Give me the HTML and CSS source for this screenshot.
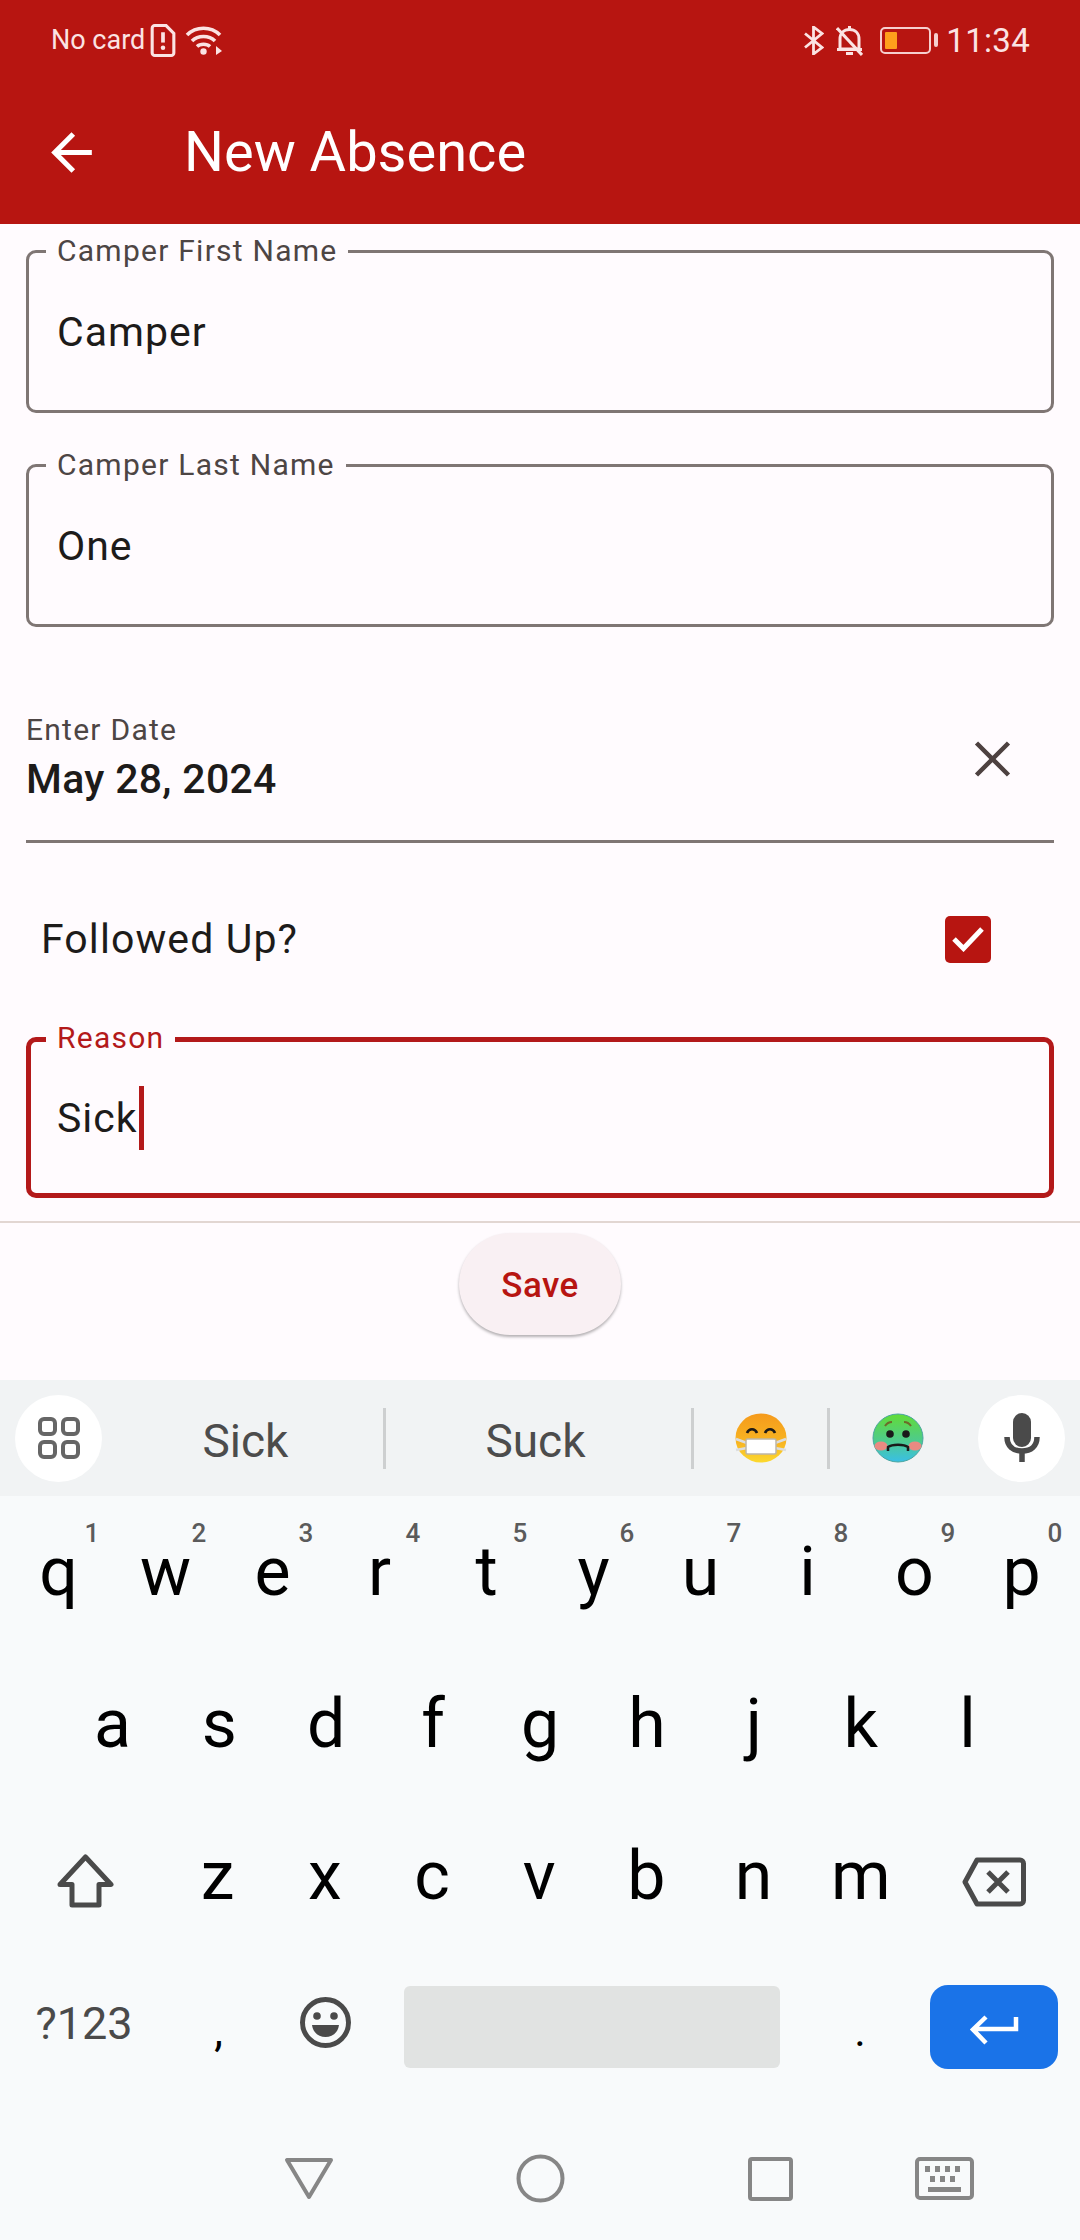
FILE: index.html
```html
<!DOCTYPE html>
<html lang="en">
<head>
<meta charset="utf-8">
<title>New Absence</title>
<link rel="stylesheet" href="styles.css">
</head>
<body>
<div class="phone">
  <header class="header">
    <div class="status">
      <span class="carrier">No card</span>
      <svg class="i-sim" viewBox="0 0 24 32"><path d="M4 1.500H15L22.500 9V28a2.500 2.500 0 0 1-2.500 2.500H4A2.500 2.500 0 0 1 1.500 28V4A2.500 2.500 0 0 1 4 1.500Z" fill="none" stroke="currentColor" stroke-width="3"/><path d="M12 8V18" stroke="currentColor" stroke-width="3.600"/><circle cx="12" cy="23" r="2.200" fill="currentColor"/></svg>
      <svg class="i-wifi" viewBox="0 0 37 29"><path d="M2 9C11 0 26 0 35 9" fill="none" stroke="currentColor" stroke-width="3.600"/><path d="M7 15C13 9 24 9 30 15" fill="none" stroke="currentColor" stroke-width="3.600"/><path d="M12 20.500C15 17.500 22 17.500 25 20.500" fill="none" stroke="currentColor" stroke-width="3.400"/><circle cx="18.500" cy="25.500" r="3.200" fill="currentColor"/><path d="M31 20V29L37 25Z" fill="currentColor"/></svg>
      <span class="status-gap"></span>
      <svg class="i-bt" viewBox="0 0 20 29"><path d="M1 7.500L18 21.500L9.500 28V1L18 7.500L1 21.500" fill="none" stroke="currentColor" stroke-width="2.800"/></svg>
      <svg class="i-bell" viewBox="0 0 27 31"><path d="M4 24V14C4 8 8 4.500 13.500 4.500S23 8 23 14V24Z" fill="none" stroke="currentColor" stroke-width="3"/><path d="M1 24.500H26M10 28.500H17M13.500 1V4" fill="none" stroke="currentColor" stroke-width="3"/><path d="M1 3L26 30" stroke="currentColor" stroke-width="3"/></svg>
      <div class="battery"><span class="battery-level"></span></div>
      <span class="battery-nub"></span>
      <span class="clock">11:34</span>
    </div>
    <div class="appbar">
      <svg class="i-back" viewBox="0 0 24 24"><path d="M20 11H7.830l5.590-5.590L12 4l-8 8 8 8 1.410-1.410L7.830 13H20v-2z" fill="currentColor"/></svg>
      <h1 class="title">New Absence</h1>
    </div>
  </header>

  <main class="form">
    <div class="field">
      <span class="field-label">Camper First Name</span>
      <span class="field-value">Camper</span>
    </div>
    <div class="field field-next">
      <span class="field-label">Camper Last Name</span>
      <span class="field-value">One</span>
    </div>
    <div class="date-row">
      <div class="date-text">
        <div class="date-label">Enter Date</div>
        <div class="date-value">May 28, 2024</div>
      </div>
      <svg class="i-clear" viewBox="0 0 36 36"><path d="M2 2L34 34M34 2L2 34" fill="none" stroke="currentColor" stroke-width="4.500"/></svg>
    </div>
    <div class="check-row">
      <span class="check-label">Followed Up?</span>
      <span class="checkbox"><svg class="i-check" viewBox="0 0 34 26"><path d="M3 13L12.500 22.500L31 3" fill="none" stroke="currentColor" stroke-width="5"/></svg></span>
    </div>
    <div class="field field-focus">
      <span class="field-label">Reason</span>
      <span class="field-value">Sick<span class="caret"></span></span>
    </div>
  </main>

  <div class="actions">
    <button class="save" type="button">Save</button>
  </div>

  <section class="keyboard">
    <div class="strip">
      <span class="round-btn">
        <svg class="i-apps" viewBox="0 0 42 42"><g fill="none" stroke="currentColor" stroke-width="4"><rect x="2" y="2" width="15" height="15" rx="4"/><rect x="25" y="2" width="15" height="15" rx="4"/><rect x="2" y="25" width="15" height="15" rx="4"/><rect x="25" y="25" width="15" height="15" rx="4"/></g></svg>
      </span>
      <span class="sug sug-a">Sick</span>
      <span class="sep"></span>
      <span class="sug sug-b">Suck</span>
      <span class="sep"></span>
      <span class="sug sug-c">
        <svg class="emoji" viewBox="0 0 52 50">
          <defs><linearGradient id="g1" x1="0" y1="0" x2="0" y2="1"><stop offset="0" stop-color="#f59a1c"/><stop offset=".6" stop-color="#f8b522"/><stop offset="1" stop-color="#fcd92f"/></linearGradient></defs>
          <ellipse cx="26" cy="25" rx="25.500" ry="24.500" fill="url(#g1)"/>
          <path d="M1 26L12 30M1 37L12 35M51 26L40 30M51 37L40 35" stroke="#ddd" stroke-width="2.500"/>
          <rect x="11" y="26" width="30" height="15" rx="1.500" fill="#fff" stroke="#bdb6a8" stroke-width="1.500"/>
          <path d="M12 20C14 15 20 15 22 20M30 20C32 15 38 15 40 20" fill="none" stroke="#1e1a16" stroke-width="2.600"/>
        </svg>
      </span>
      <span class="sep"></span>
      <span class="sug sug-d">
        <svg class="emoji" viewBox="0 0 52 50">
          <defs><linearGradient id="g2" x1="0" y1="0" x2="0" y2="1"><stop offset="0" stop-color="#62dc35"/><stop offset=".55" stop-color="#4ecb8c"/><stop offset="1" stop-color="#39bfe6"/></linearGradient></defs>
          <ellipse cx="26" cy="25" rx="25" ry="24" fill="url(#g2)" stroke="#4aa5a0" stroke-width="1"/>
          <ellipse cx="9" cy="33" rx="6.500" ry="4.500" fill="#ea8a82"/>
          <ellipse cx="43" cy="33" rx="6.500" ry="4.500" fill="#ea8a82"/>
          <circle cx="18" cy="21" r="3.800" fill="#1a1a1a"/>
          <circle cx="34" cy="21" r="3.800" fill="#1a1a1a"/>
          <path d="M13 13C15 10 18 9 20 9M39 13C37 10 34 9 32 9" fill="none" stroke="#6d6b2a" stroke-width="2"/>
          <path d="M16 38V34C20 31 32 31 36 34V38" fill="none" stroke="#1a1a1a" stroke-width="2.500"/>
        </svg>
      </span>
      <span class="round-btn round-mic">
        <svg class="i-mic" viewBox="0 0 36 50"><rect x="9" y="0" width="18" height="34" rx="9" fill="currentColor"/><path d="M3 24C3 33 9 38 18 38S33 33 33 24" fill="none" stroke="currentColor" stroke-width="5.500"/><path d="M18 38V49" stroke="currentColor" stroke-width="5.500"/></svg>
      </span>
    </div>

    <div class="keys row-1">
      <span class="key">q<sup class="hint">1</sup></span>
      <span class="key">w<sup class="hint">2</sup></span>
      <span class="key">e<sup class="hint">3</sup></span>
      <span class="key">r<sup class="hint">4</sup></span>
      <span class="key">t<sup class="hint">5</sup></span>
      <span class="key">y<sup class="hint">6</sup></span>
      <span class="key">u<sup class="hint">7</sup></span>
      <span class="key">i<sup class="hint">8</sup></span>
      <span class="key">o<sup class="hint">9</sup></span>
      <span class="key">p<sup class="hint">0</sup></span>
    </div>
    <div class="keys row-2">
      <span class="key">a</span><span class="key">s</span><span class="key">d</span><span class="key">f</span><span class="key">g</span><span class="key">h</span><span class="key">j</span><span class="key">k</span><span class="key">l</span>
    </div>
    <div class="keys row-3">
      <span class="key">
        <svg class="i-shift" viewBox="0 0 57 54"><path d="M28.500 3L54 30.500H42V51H15V30.500H3Z" fill="none" stroke="currentColor" stroke-width="5" stroke-linejoin="round"/></svg>
      </span>
      <span class="key">z</span><span class="key">x</span><span class="key">c</span><span class="key">v</span><span class="key">b</span><span class="key">n</span><span class="key">m</span>
      <span class="key">
        <svg class="i-bksp" viewBox="0 0 64 50"><path d="M15 3H58A3.500 3.500 0 0 1 61.500 6.500V43.500A3.500 3.500 0 0 1 58 47H15L3 25Z" fill="none" stroke="currentColor" stroke-width="5" stroke-linejoin="round"/><path d="M26 15L46 35M46 15L26 35" stroke="currentColor" stroke-width="5"/></svg>
      </span>
    </div>
    <div class="row-4">
      <span class="sym">?123</span>
      <span class="punct">,</span>
      <span class="smile-key">
        <svg class="i-smile" viewBox="0 0 51 51"><circle cx="25.500" cy="25.500" r="23" fill="none" stroke="currentColor" stroke-width="5"/><circle cx="17" cy="19" r="3.800" fill="currentColor"/><circle cx="34" cy="19" r="3.800" fill="currentColor"/><path d="M12 28H39C38 36 32 40 25.500 40S13 36 12 28Z" fill="currentColor"/></svg>
      </span>
      <span class="space"></span>
      <span class="punct punct-dot">.</span>
      <span class="enter">
        <svg class="i-enter" viewBox="0 0 50 30"><path d="M47 2V14H6M17 2L4 14.500L17 28" fill="none" stroke="currentColor" stroke-width="4.500"/></svg>
      </span>
    </div>
    <nav class="nav">
      <svg class="nav-back" viewBox="0 0 50 42"><path d="M3 2H47L25 39Z" fill="none" stroke="currentColor" stroke-width="4" stroke-linejoin="round"/></svg>
      <svg class="nav-home" viewBox="0 0 49 49"><circle cx="24.500" cy="24.500" r="22" fill="none" stroke="currentColor" stroke-width="4"/></svg>
      <svg class="nav-recent" viewBox="0 0 45 44"><rect x="2" y="2" width="41" height="40" rx="2" fill="none" stroke="currentColor" stroke-width="4"/></svg>
      <svg class="nav-kbd" viewBox="0 0 59 43"><rect x="2" y="2" width="55" height="39" rx="3" fill="none" stroke="currentColor" stroke-width="4"/><path d="M10 9h5v6h-5zM20 9h5v6h-5zM30 9h5v6h-5zM40 9h5v6h-5zM15 19h5v6h-5zM25 19h5v6h-5zM35 19h5v6h-5zM13 30h33v5H13z" fill="currentColor"/></svg>
    </nav>
  </section>
</div>
</body>
</html>
```

FILE: styles.css
```css
* { box-sizing: border-box; }
html, body { margin: 0; padding: 0; }
body { font-family: Roboto, "Liberation Sans", sans-serif; background: #fffbfe; }
.phone { width: 1080px; height: 2240px; overflow: hidden; display: flex; flex-direction: column; background: #fffbfe; }

.header { height: 224px; background: #b71511; color: #fff; flex: none; }
.status { height: 80px; display: flex; align-items: center; padding: 0 50px 0 51px; color: #fbe3e3; }
.carrier { font-size: 27px; width: 99px; white-space: nowrap; }
.i-sim { width: 26px; height: 33px; flex: none; }
.i-wifi { width: 37px; height: 29px; margin-left: 9px; flex: none; }
.status-gap { flex: 1; }
.i-bt { width: 20px; height: 29px; flex: none; }
.i-bell { width: 27px; height: 31px; margin-left: 12px; flex: none; }
.battery { width: 51px; height: 27px; margin-left: 17px; border: 2px solid #f6cfcf; border-radius: 5px; padding: 3px; flex: none; }
.battery-level { display: block; width: 12px; height: 100%; background: #ff9f1c; border-radius: 1px; }
.battery-nub { width: 4px; height: 14px; margin-left: 3px; background: #f6cfcf; border-radius: 2px; flex: none; }
.clock { font-size: 33px; margin-left: 8px; letter-spacing: .3px; }

.appbar { height: 144px; display: flex; align-items: center; padding-left: 41px; }
.i-back { width: 61px; height: 61px; flex: none; }
.title { margin: 0 0 0 82px; font-size: 56px; font-weight: 400; line-height: 1; }

.form { height: 999px; flex: none; padding: 26px 26px 0; border-bottom: 2px solid #e2d6d2; }
.field { position: relative; height: 163px; border: 3px solid #7f7674; border-radius: 10px; display: flex; align-items: center; padding: 0 0 0 28px; }
.field-next { margin-top: 51px; }
.field-label { position: absolute; left: 17px; top: -20px; padding: 0 11px; line-height: 36px; font-size: 30px; letter-spacing: 1.25px; color: #4d4544; background: #fffbfe; white-space: nowrap; }
.field-value { font-size: 41px; letter-spacing: 1px; color: #1d1b1a; display: flex; align-items: center; }
.field-focus { margin-top: 50px; height: 161px; border: 5px solid #b3191a; padding-left: 26px; }
.field-focus .field-label { left: 15px; top: -22px; color: #b3191a; }
.caret { width: 5px; height: 64px; background: #b3191a; margin-left: 1px; }

.date-row { margin-top: 85px; height: 131px; border-bottom: 3px solid #7f7674; display: flex; justify-content: space-between; padding-right: 43px; }
.date-label { font-size: 30px; line-height: 36px; letter-spacing: 1.25px; color: #4d4544; }
.date-value { margin-top: 6px; font-size: 41px; line-height: 50px; font-weight: 500; letter-spacing: .3px; color: #1d1b1a; }
.i-clear { width: 37px; height: 36px; margin-top: 29px; color: #4d4140; flex: none; }

.check-row { margin-top: 48px; height: 96px; display: flex; align-items: center; justify-content: space-between; padding: 0 63px 0 15px; }
.check-label { font-size: 41px; letter-spacing: 1.1px; color: #1d1b1a; }
.checkbox { width: 46px; height: 47px; background: #b71511; border-radius: 5px; display: flex; align-items: center; justify-content: center; color: #fff; }
.i-check { width: 34px; height: 26px; }

.actions { height: 157px; flex: none; padding-top: 10px; display: flex; justify-content: center; align-items: flex-start; }
.save { width: 162px; height: 102px; padding-top: 4px; border: 0; border-radius: 51px; background: #f9f0f3; color: #b71511; font: 500 35px Roboto, sans-serif; letter-spacing: .4px; box-shadow: 0 2px 3px rgba(0,0,0,.3); }

.keyboard { flex: 1; background: #f8fafb; }
.strip { height: 116px; background: #f1f3f4; display: flex; align-items: center; padding-left: 15px; }
.round-btn { width: 87px; height: 87px; border-radius: 50%; background: #fff; display: flex; align-items: center; justify-content: center; color: #666; flex: none; }
.i-apps { width: 42px; height: 42px; }
.round-mic { margin-left: 12px; color: #4a4a4a; }
.i-mic { width: 36px; height: 50px; }
.sug { display: flex; align-items: center; justify-content: center; font-size: 46px; color: #4c4c4c; flex: none; }
.sug-a { width: 281px; padding: 6px 0 0 6px; }
.sug-b { width: 305px; padding: 6px 6px 0 0; }
.sug-c { width: 133px; }
.sug-d { width: 136px; }
.sep { width: 3px; height: 61px; background: #cdcfd0; flex: none; }
.emoji { width: 52px; height: 50px; }

.keys { height: 152px; display: grid; align-items: center; }
.row-1 { margin-top: 10px; padding: 0 5px; grid-template-columns: repeat(10, 1fr); }
.row-2 { padding: 0 59px; grid-template-columns: repeat(9, 1fr); }
.row-3 { padding: 0 0 0 6px; grid-template-columns: 158px repeat(7, 107.2px) 159px; color: #4a4a4a; }
.key { position: relative; display: flex; justify-content: center; align-items: center; height: 152px; padding-bottom: 20px; font-size: 68px; line-height: 1; color: #000; }
.hint { position: absolute; left: 50%; top: 13px; margin-left: 26px; font-size: 26px; line-height: 28px; font-weight: 500; color: #5b5b5b; }
.i-shift { width: 57px; height: 54px; color: #4a4a4a; margin-top: 9px; }
.i-bksp { width: 64px; height: 50px; color: #4a4a4a; margin-top: 12px; }

.row-4 { height: 124px; margin-top: 3px; display: flex; align-items: center; padding-left: 5px; }
.sym { width: 158px; padding-bottom: 7px; text-align: center; font-size: 45px; color: #4a4a4a; flex: none; }
.punct { width: 108px; padding: 8px 0 0 3px; text-align: center; font-size: 44px; color: #000; flex: none; }
.smile-key { width: 108px; display: flex; justify-content: center; color: #4a4a4a; flex: none; padding-bottom: 10px; }
.i-smile { width: 51px; height: 51px; }
.space { width: 376px; height: 82px; margin-left: 25px; background: #e1e3e2; border-radius: 6px; flex: none; }
.punct-dot { margin-left: 26px; padding-left: 0; }
.enter { width: 128px; height: 84px; margin-left: 16px; padding-top: 6px; background: #1a73e8; border-radius: 18px; display: flex; align-items: center; justify-content: center; color: #fff; flex: none; }
.i-enter { width: 50px; height: 30px; }

.nav { height: 149px; display: flex; align-items: center; padding: 30px 0 0 284px; color: #868686; }
.nav-back { width: 50px; height: 42px; flex: none; }
.nav-home { width: 49px; height: 49px; margin-left: 182px; flex: none; }
.nav-recent { width: 45px; height: 44px; margin-left: 183px; flex: none; }
.nav-kbd { width: 59px; height: 43px; margin-left: 122px; flex: none; }
```
